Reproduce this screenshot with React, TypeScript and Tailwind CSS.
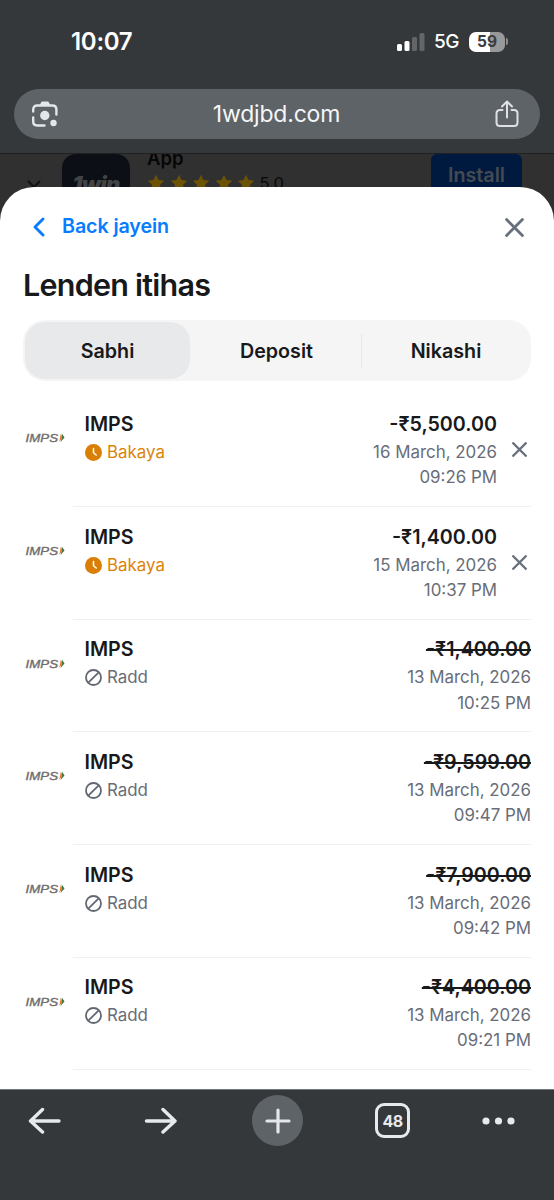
import React from "react";

const transactions = [
  { amount: "-₹5,500.00", date: "16 March, 2026", time: "09:26 PM", pending: true },
  { amount: "-₹1,400.00", date: "15 March, 2026", time: "10:37 PM", pending: true },
  { amount: "-₹1,400.00", date: "13 March, 2026", time: "10:25 PM", pending: false },
  { amount: "-₹9,599.00", date: "13 March, 2026", time: "09:47 PM", pending: false },
  { amount: "-₹7,900.00", date: "13 March, 2026", time: "09:42 PM", pending: false },
  { amount: "-₹4,400.00", date: "13 March, 2026", time: "09:21 PM", pending: false },
];

const StatusBar = () => (
  <div className="flex h-[89px] items-start justify-between pt-[26px] pr-[46px] pl-[71px]">
    <span className="text-[24px] leading-[32px] font-semibold tracking-[-0.3px]">10:07</span>
    <div className="flex h-[31px] items-center">
      <svg width="28" height="18" viewBox="0 0 28 18" fill="#fff">
        <rect x="0" y="11" width="5" height="7" rx="1.5" />
        <rect x="7.5" y="8" width="5" height="10" rx="1.5" />
        <rect x="15" y="4" width="5" height="14" rx="1.5" opacity=".23" />
        <rect x="22.5" y="0" width="5" height="18" rx="1.5" opacity=".23" />
      </svg>
      <span className="ml-[9px] w-[26px] text-[19px] leading-6 font-medium tracking-[-0.4px]">5G</span>
      <div className="ml-[9px] flex h-5 w-9 items-center justify-center rounded-[7px] bg-linear-to-r from-white from-[58%] to-[#98999b] to-[58%] text-[15.5px] font-bold text-[#3a3c3f]">
        59
      </div>
      <div className="ml-px h-[7px] w-[2px] rounded-r-full bg-[#8b8d8f]" />
    </div>
  </div>
);

const AddressBar = () => (
  <div className="mx-[14px] flex h-[50px] items-center justify-between rounded-full bg-[#5e6367] pr-[20px] pl-[17px]">
    <svg width="28" height="28" viewBox="0 0 28 28" fill="none" stroke="#e3e7ec" strokeWidth="2.4" strokeLinecap="round">
      <path d="M2.2 11.500V9.500q0-4 4-4h15.200q4 0 4 4v5M2.2 17.500v4q0 4 4 4h7.300" />
      <path d="M9.500 5 11 2.300h6L18.500 5z" fill="#e3e7ec" strokeWidth="1.5" strokeLinejoin="round" />
      <circle cx="13.800" cy="15.500" r="4.700" fill="#e3e7ec" stroke="none" />
      <circle cx="22.500" cy="23" r="3.200" fill="#e3e7ec" stroke="none" />
    </svg>
    <span className="text-[23px] leading-[30px] tracking-[-0.2px] text-[#f4f6f8]">1wdjbd.com</span>
    <svg width="26" height="28" viewBox="0 0 26 28" fill="none" stroke="#dfe1e4" strokeWidth="2" strokeLinecap="round" strokeLinejoin="round">
      <path d="M8.500 10H6q-3.500 0-3.500 3.500v9q0 3.500 3.500 3.500h14q3.500 0 3.500-3.500v-9q0-3.500-3.500-3.500h-2.500M13 17.500V2M8 6.500l5-5 5 5" />
    </svg>
  </div>
);

const AppBanner = () => (
  <div className="flex h-[33px] shrink-0 items-start overflow-hidden pr-8 pl-[27px]">
    <svg className="mt-[26px] shrink-0" width="14" height="9" viewBox="0 0 14 9" fill="none" stroke="#111" strokeWidth="2.2">
      <path d="m1 1 6 6 6-6" />
    </svg>
    <div className="ml-[21px] flex h-[68px] w-[68px] shrink-0 justify-center rounded-[14px] bg-[#0c1016] pt-[18px]">
      <span className="text-[22px] leading-6 font-black tracking-[-0.8px] text-[#434445] italic">1win</span>
    </div>
    <div className="ml-[17px] h-[50px]">
      <p className="-mt-2 text-[18.5px] leading-[25px] font-semibold text-[#060606]">App</p>
      <div className="mt-[3px] flex items-center">
        {[0, 1, 2, 3, 4].map((i) => (
          <svg key={i} className="mr-[4.5px]" width="18" height="18" viewBox="0 0 24 24" fill="#6b5204">
            <path d="m12 1 3.400 7 7.600 1-5.600 5.300L18.800 22 12 18.300 5.200 22l1.400-7.700L1 9l7.600-1z" />
          </svg>
        ))}
        <span className="text-[16.5px] leading-[18px] text-[#080808]">5.0</span>
      </div>
    </div>
    <div className="ml-auto h-[44px] w-[91px] rounded-[6px] bg-[#001a3f] pt-[9px] text-center text-[19.7px] leading-6 font-semibold text-[#444a50]">
      Install
    </div>
  </div>
);

const Cross = ({ size, strokeWidth, className }: { size: number; strokeWidth: number; className?: string }) => (
  <svg className={className} width={size} height={size} viewBox="0 0 18 18" fill="none" stroke="#69707d" strokeWidth={strokeWidth} strokeLinecap="round">
    <path d="m1.500 1.500 15 15m0-15-15 15" />
  </svg>
);

const ImpsLogo = () => (
  <svg className="ml-[2px] shrink-0" width="40" height="12" viewBox="0 0 40 12">
    <text x="0.5" y="9.5" textLength="32.5" lengthAdjust="spacingAndGlyphs" fill="#6f6d6b" stroke="#6f6d6b" strokeWidth=".35" className="font-['Liberation_Sans',sans-serif] text-[10.5px] italic">
      IMPS
    </text>
    <path d="M36.800 1.500 39.500 5.500 35.500 10l1.300-4.500z" fill="#2a7a45" />
    <path d="M35.700 1.800 37.500 5.500 34.300 10z" fill="#f07a32" />
  </svg>
);

const Tabs = () => (
  <div className="mx-[23px] mt-[17px] flex h-[61px] rounded-[22px] bg-[#f5f5f5] p-[2px] text-[19.7px] font-semibold">
    <div className="flex w-[165px] items-center justify-center rounded-[20px] bg-[#e8e9eb] pt-[2px]">Sabhi</div>
    <div className="flex flex-1 items-center justify-center pt-[2px] pl-[2px]">Deposit</div>
    <div className="my-auto h-[34px] w-px bg-[#e8e8ea]" />
    <div className="flex w-[167px] items-center justify-center pt-[2px] pl-px">Nikashi</div>
  </div>
);

const Transaction = ({ item }: { item: (typeof transactions)[number] }) => (
  <div className="flex h-[112.67px] items-stretch">
    <div className="flex w-[50px] shrink-0 items-start pt-[38px]">
      <ImpsLogo />
    </div>
    <div className="flex flex-1 border-b border-[#f1f1f2] pt-[14.5px] pl-[11.5px]">
      <div>
        <p className="text-[19.7px] leading-[31px] font-semibold">IMPS</p>
        {item.pending ? (
          <div className="flex items-center text-[16.9px] leading-[25.3px] text-[#dc8408]">
            <svg className="mr-[5.5px]" width="17" height="17" viewBox="0 0 17 17">
              <circle cx="8.5" cy="8.5" r="8.5" fill="#d97f04" />
              <path d="M8.500 4.500v4.200l2.700 2.300" fill="none" stroke="#fff" strokeWidth="1.5" strokeLinecap="round" />
            </svg>
            <span>Bakaya</span>
          </div>
        ) : (
          <div className="flex items-center text-[16.9px] leading-[25.3px] text-[#696d77]">
            <svg className="mr-[5.5px]" width="17" height="17" viewBox="0 0 17 17" fill="none" stroke="#626772" strokeWidth="1.8">
              <circle cx="8.5" cy="8.5" r="7.5" />
              <path d="M3.300 13.700 13.700 3.300" />
            </svg>
            <span>Radd</span>
          </div>
        )}
      </div>
      <div className="ml-auto text-right text-[16.9px] leading-[25.3px] text-[#696d77]">
        <p className={item.pending ? "text-[19.7px] leading-[31px] font-semibold text-[#18191b]" : "text-[19.7px] leading-[31px] font-semibold text-[#18191b] line-through decoration-[1.5px]"}>
          {item.amount}
        </p>
        <p>{item.date}</p>
        <p>{item.time}</p>
      </div>
      {item.pending && <Cross size={15} strokeWidth={2.9} className="mt-[33px] mr-[4px] ml-[15px]" />}
    </div>
  </div>
);

const Toolbar = () => (
  <div className="flex h-[111px] shrink-0 items-start border-t border-[#737678] bg-[#35383b] pt-[5px] pl-[28px]">
    <svg className="mt-[12px]" width="33" height="27" viewBox="0 0 33 27" fill="none" stroke="#e6e9ed" strokeWidth="3.4" strokeLinecap="round" strokeLinejoin="round">
      <path d="M14.500 2.500 2.500 14l12 11M3 14h28" />
    </svg>
    <svg className="mt-[12px] ml-[83px]" width="33" height="27" viewBox="0 0 33 27" fill="none" stroke="#e6e9ed" strokeWidth="3.4" strokeLinecap="round" strokeLinejoin="round">
      <path d="m19 2.500 12 11.500-12 11M30 14H2.500" />
    </svg>
    <div className="ml-[75px] flex h-[51px] w-[51px] items-center justify-center rounded-full bg-[#5e6367]">
      <svg width="26" height="26" viewBox="0 0 26 26" stroke="#e3e6ea" strokeWidth="3.2" strokeLinecap="round">
        <path d="M13 2v22M2 13h22" />
      </svg>
    </div>
    <div className="mt-[8px] ml-[72px] flex h-[35px] w-[35px] items-center justify-center rounded-[9px] border-[3px] border-[#e6e9ed] text-[16px] font-bold tracking-[-0.5px] text-[#e6e9ed]">
      48
    </div>
    <svg className="mt-[22px] ml-[72px]" width="33" height="8" viewBox="0 0 33 8" fill="#e6e9ed">
      <circle cx="4" cy="4" r="3.6" />
      <circle cx="16.5" cy="4" r="3.6" />
      <circle cx="29" cy="4" r="3.6" />
    </svg>
  </div>
);

const App = () => {
  return (
    <div className="flex h-[1200px] w-[554px] flex-col overflow-hidden bg-[#303030] font-['Inter',sans-serif]">
      <header className="h-[154px] shrink-0 border-b border-[#1e2021] bg-[#35383b] text-white">
        <StatusBar />
        <AddressBar />
      </header>
      <AppBanner />
      <main className="flex-1 rounded-t-[34px] bg-white text-[#18191b]">
        <div className="flex h-[79px] items-center justify-between pt-px pr-[30px] pl-[32.5px]">
          <div className="flex items-center text-[19.7px] font-semibold tracking-[-0.1px] text-[#087cff]">
            <svg className="mr-[17.5px]" width="12" height="20" viewBox="0 0 12 20" fill="none" stroke="#087cff" strokeWidth="2.9" strokeLinecap="round" strokeLinejoin="round">
              <path d="m10 2-8 8 8 8" />
            </svg>
            Back jayein
          </div>
          <Cross size={19} strokeWidth={2.7} />
        </div>
        <h1 className="pl-[23px] text-[30.5px] leading-[37px] font-semibold tracking-[-0.75px]">Lenden itihas</h1>
        <Tabs />
        <div className="mx-[23px] pt-[13.4px]">
          {transactions.map((item) => (
            <Transaction key={item.time} item={item} />
          ))}
        </div>
      </main>
      <Toolbar />
    </div>
  );
};

export default App;
